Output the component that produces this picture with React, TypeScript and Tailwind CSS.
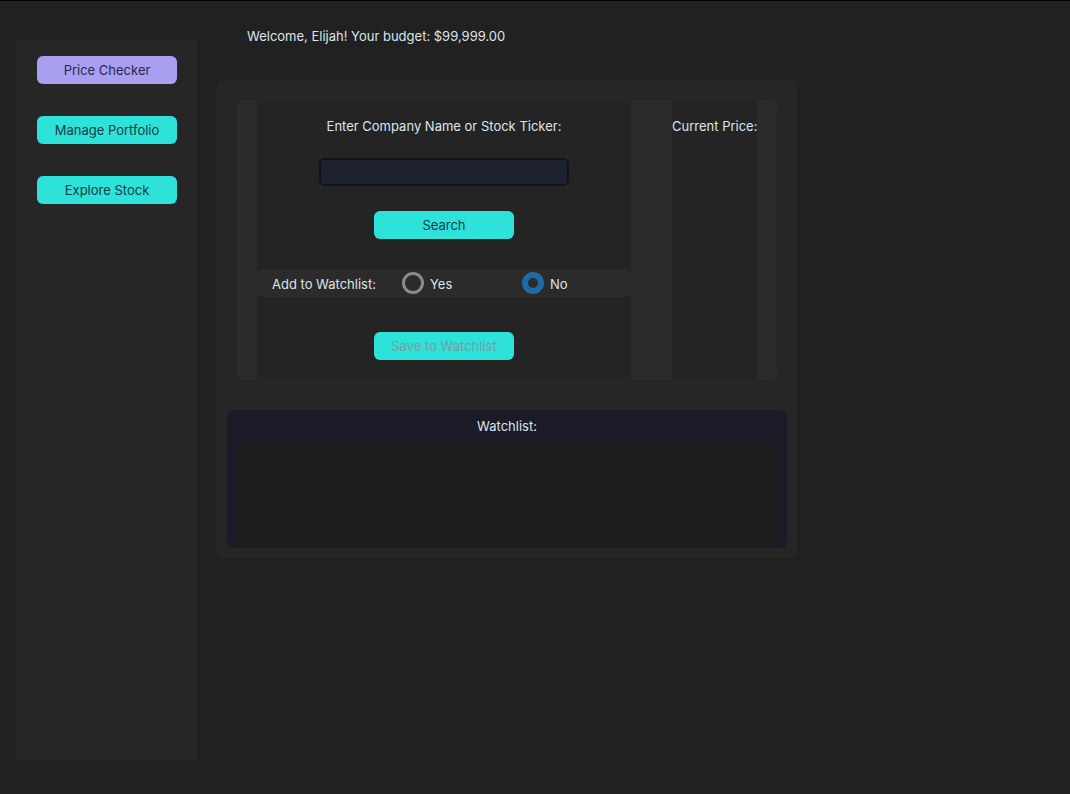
import React, { useState } from "react";

type Page = "price" | "portfolio" | "explore";

const font = { fontFamily: "Inter, 'Liberation Sans', sans-serif" };

function NavButton({ label, active, onClick }: { label: string; active: boolean; onClick: () => void }) {
  return (
    <button
      onClick={onClick}
      className={`w-[140px] h-[28px] rounded-md text-[13px] leading-[28px] text-center ${
        active ? "bg-[#a99ff1] text-[#2a2948]" : "bg-[#2de2d9] text-[#173a45]"
      }`}
    >
      {label}
    </button>
  );
}

function Radio({ label, checked, onClick }: { label: string; checked: boolean; onClick: () => void }) {
  return (
    <button onClick={onClick} className="w-[120px] shrink-0 flex items-center gap-[6px] text-left">
      <span
        className={`block shrink-0 w-[22px] h-[22px] rounded-full ${
          checked ? "border-[6px] border-[#1f6aa5]" : "border-[3px] border-[#8b8b8b]"
        }`}
      />
      <span className="pt-[3px] text-[13px] text-[#dce4ee]">{label}</span>
    </button>
  );
}

export default function App() {
  const [page, setPage] = useState<Page>("price");
  const [ticker, setTicker] = useState("");
  const [watch, setWatch] = useState<"yes" | "no">("no");

  return (
    <div className="min-h-screen w-full bg-[#212121] border-t border-black text-[#dce4ee]" style={font}>
      <div className="flex pl-[17px]">
        {/* Sidebar */}
        <div className="mt-[39px] w-[180px] h-[720px] bg-[#262626] flex flex-col items-center pt-[16px] gap-[32px]">
          <NavButton label="Price Checker" active={page === "price"} onClick={() => setPage("price")} />
          <NavButton label="Manage Portfolio" active={page === "portfolio"} onClick={() => setPage("portfolio")} />
          <NavButton label="Explore Stock" active={page === "explore"} onClick={() => setPage("explore")} />
        </div>

        {/* Main */}
        <div className="ml-5 pt-[26px]">
          <p className="pl-[30px] h-[18px] leading-[18px] text-[13px]">Welcome, Elijah! Your budget: $99,999.00</p>

          <div className="mt-[35px] w-[580px] h-[478px] bg-[#262626] rounded-md pt-5 pb-[10px] flex flex-col items-center">
            {/* Search frame */}
            <div className="w-[540px] h-[280px] bg-[#2b2b2b] rounded-md px-5 flex">
              <div className="w-[374px] shrink-0 h-full bg-[#242424] flex flex-col items-center pt-[18px]">
                <p className="h-[16px] leading-[16px] text-[13px]">Enter Company Name or Stock Ticker:</p>
                <input
                  value={ticker}
                  onChange={e => setTicker(e.target.value)}
                  className="mt-[24px] w-[250px] h-[28px] rounded-md bg-[#1e2130] border-2 border-[#121316] px-2 text-[13px] text-[#dce4ee] outline-none"
                />
                <button className="mt-[25px] w-[140px] h-[28px] pt-px rounded-md bg-[#2de2d9] text-[#173a45] text-[13px]">
                  Search
                </button>
                <div className="mt-[30px] w-full h-[28px] bg-[#2b2b2b] rounded-md flex items-center pl-[15px]">
                  <span className="w-[130px] shrink-0 pt-[3px] text-[13px]">Add to Watchlist:</span>
                  <Radio label="Yes" checked={watch === "yes"} onClick={() => setWatch("yes")} />
                  <Radio label="No" checked={watch === "no"} onClick={() => setWatch("no")} />
                </div>
                <button
                  disabled
                  className="mt-[35px] w-[140px] h-[28px] pt-px rounded-md bg-[#2de2d9] text-[#7c9da0] text-[13px]"
                >
                  Save to Watchlist
                </button>
              </div>
              <div className="w-[85px] shrink-0 ml-[41px] h-full bg-[#242424] pt-[18px]">
                <p className="h-[16px] leading-[16px] text-[13px] whitespace-nowrap">Current Price:</p>
              </div>
            </div>

            {/* Watchlist */}
            <div className="mt-[30px] w-[560px] h-[138px] bg-[#1b1c28] rounded-md flex flex-col items-center pt-[8px] px-[10px] pb-[3px]">
              <p className="h-[16px] leading-[16px] text-[13px]">Watchlist:</p>
              <div className="mt-[9px] w-full flex-1 bg-[#1d1e1e]" />
            </div>
          </div>
        </div>
      </div>
    </div>
  );
}
